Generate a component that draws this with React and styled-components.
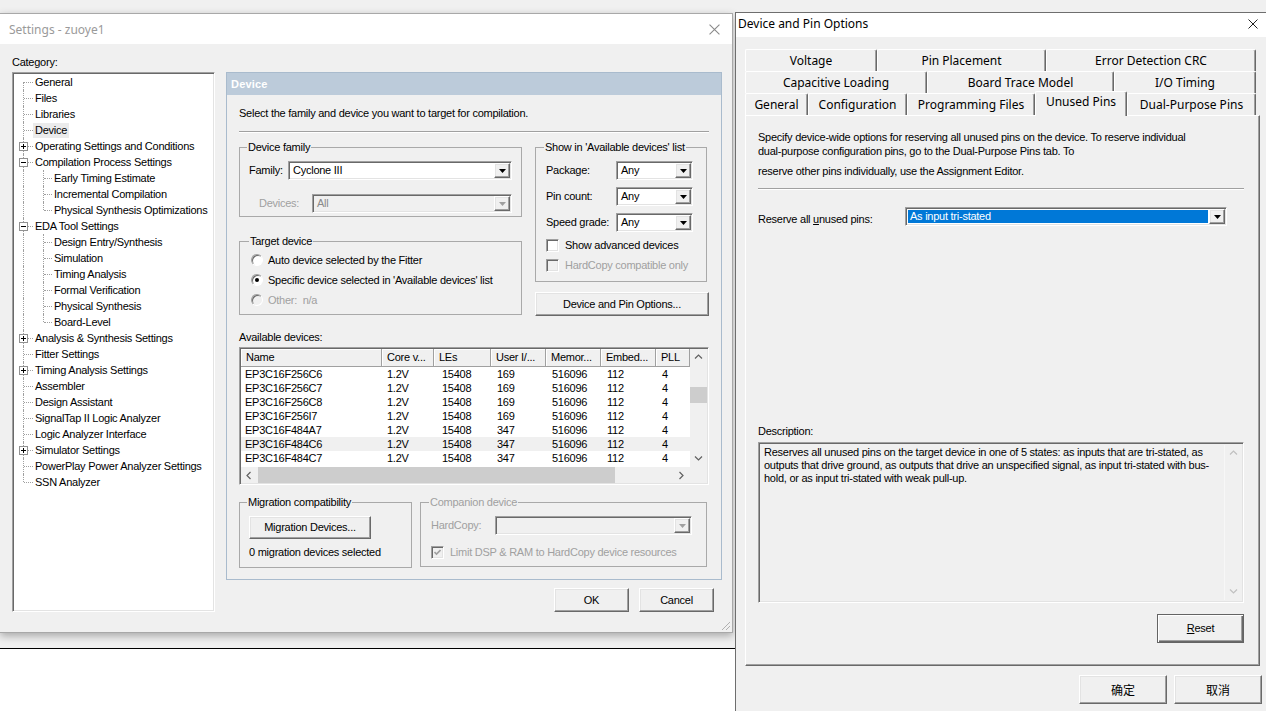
import React from "react";
import styled, { createGlobalStyle, css } from "styled-components";

const GlobalStyle = createGlobalStyle`
  html, body { margin: 0; padding: 0; background: #fff; }
  body {
    font-family: "Liberation Sans", Arial, sans-serif;
    font-size: 11px;
    color: #000;
  }
  * { box-sizing: border-box; }
`;

const ui = css`
  font-family: "Liberation Sans", Arial, sans-serif;
  font-size: 11px;
  letter-spacing: -0.25px;
  line-height: 13px;
`;

const winFont = css`
  font-family: "Noto Sans", "Noto Sans CJK SC", sans-serif;
  font-size: 12px;
`;

const sunken = css`
  border: 1px solid;
  border-color: #a0a0a0 #fff #fff #a0a0a0;
  box-shadow: inset 1px 1px 0 #696969, inset -1px -1px 0 #e3e3e3;
`;

const raised = css`
  border: 1px solid;
  border-color: #fff #696969 #696969 #fff;
  box-shadow: inset -1px -1px 0 #a0a0a0, inset 1px 1px 0 #e3e3e3;
`;

const Desktop = styled.div`
  position: relative;
  width: 1266px;
  height: 711px;
  overflow: hidden;
  background: #f0f0f0;
`;

const BackWindow = styled.div`
  position: absolute;
  left: 0;
  top: 648px;
  width: 740px;
  height: 63px;
  background: #fff;
  border-top: 1px solid #000;
`;

/* ---------- Settings window ---------- */

const SettingsWindow = styled.div`
  position: absolute;
  left: 0;
  top: 13px;
  width: 733px;
  height: 620px;
  background: #f0f0f0;
  border: 1px solid #a8a8a8;
  border-left: none;
  box-shadow: 0 3px 8px rgba(0, 0, 0, 0.3);
  display: flex;
  flex-direction: column;
`;

const TitleBar = styled.div`
  ${winFont}
  flex: none;
  height: ${(p) => p.$h}px;
  background: #fff;
  color: ${(p) => p.$color};
  display: flex;
  align-items: center;
  justify-content: space-between;
  padding: 0 ${(p) => p.$pr}px ${(p) => p.$pb || 0}px ${(p) => p.$pl}px;
`;

const SettingsBody = styled.div`
  flex: 1;
  display: flex;
  ${ui}
`;

const CategoryCol = styled.div`
  width: 203px;
  margin-left: 12px;
  padding-top: 12px;
  display: flex;
  flex-direction: column;
`;

const Caption = styled.div`
  ${ui}
  margin-top: ${(p) => p.$mt || 0}px;
  margin-bottom: ${(p) => p.$mb || 0}px;
  color: ${(p) => (p.$disabled ? "#a0a0a0" : "#000")};
  white-space: nowrap;
`;

const TreeBox = styled.div`
  ${sunken}
  width: 203px;
  height: 540px;
  background: #fff;
  padding-top: 1px;
`;

const TreeRow = styled.div`
  height: 16px;
  display: flex;
  align-items: center;
  white-space: nowrap;
`;

const Guide = styled.span`
  position: relative;
  flex: none;
  width: ${(p) => p.$w}px;
  height: 16px;
  &::before {
    content: "";
    position: absolute;
    left: 10px;
    top: ${(p) => (p.$kind === "first" ? "8px" : "0")};
    height: ${(p) => (p.$kind === "end" || p.$kind === "first" ? "8px" : "16px")};
    border-left: 1px dotted #a0a0a0;
  }
  &::after {
    content: "";
    position: absolute;
    left: 11px;
    top: 8px;
    width: ${(p) => p.$w - 11}px;
    border-top: 1px dotted #a0a0a0;
    display: ${(p) => (p.$kind === "pipe" ? "none" : "block")};
  }
`;

const Expander = styled.span`
  position: absolute;
  left: 6px;
  top: 4px;
  width: 9px;
  height: 9px;
  border: 1px solid #919191;
  background: #fff;
  z-index: 1;
  &::before {
    content: "";
    position: absolute;
    left: 1px;
    top: 3px;
    width: 5px;
    height: 1px;
    background: #000;
  }
  &::after {
    content: "";
    position: absolute;
    left: 3px;
    top: 1px;
    width: 1px;
    height: 5px;
    background: #000;
    display: ${(p) => (p.$open ? "none" : "block")};
  }
`;

const TreeLabel = styled.span`
  ${ui}
  padding: 1px 2px;
  background: ${(p) => (p.$selected ? "#ebebeb" : "transparent")};
`;

const MainCol = styled.div`
  width: 496px;
  margin-left: 11px;
  padding-top: 28px;
  display: flex;
  flex-direction: column;
`;

const Panel = styled.div`
  height: 508px;
  border: 1px solid #a9bbcd;
  display: flex;
  flex-direction: column;
`;

const PanelHeader = styled.div`
  ${ui}
  height: 22px;
  background: #bccbda;
  color: #fff;
  font-weight: bold;
  letter-spacing: 0.2px;
  display: flex;
  align-items: center;
  padding-left: 4px;
`;

const PanelBody = styled.div`
  padding: 0 12px;
  display: flex;
  flex-direction: column;
`;

const Separator = styled.div`
  height: 2px;
  border-top: 1px solid #a0a0a0;
  border-bottom: 1px solid #fff;
  margin-top: ${(p) => p.$mt || 0}px;
`;

const GroupsRow = styled.div`
  display: flex;
  align-items: flex-start;
  gap: ${(p) => p.$gap}px;
  margin-top: ${(p) => p.$mt}px;
`;

const Column = styled.div`
  width: ${(p) => p.$w}px;
  display: flex;
  flex-direction: column;
`;

const Group = styled.fieldset`
  ${ui}
  margin: ${(p) => p.$mt || 0}px 0 0 0;
  padding: 0 ${(p) => p.$pr || 9}px ${(p) => p.$pb || 0}px ${(p) => p.$pl || 9}px;
  border: 1px solid #a9a9a9;
  min-width: 0;
  width: ${(p) => p.$w}px;
  display: flex;
  flex-direction: column;
  color: ${(p) => (p.$disabled ? "#a0a0a0" : "#000")};
`;

const Legend = styled.legend`
  ${ui}
  line-height: 14px;
  padding: 0 1px;
  margin-left: -2px;
`;

const FieldRow = styled.div`
  display: flex;
  align-items: center;
  height: ${(p) => p.$h || 19}px;
  margin-top: ${(p) => p.$mt || 0}px;
  padding-left: ${(p) => p.$indent || 0}px;
`;

const FieldLabel = styled.span`
  ${ui}
  flex: ${(p) => (p.$w ? "none" : "1")};
  width: ${(p) => (p.$w ? `${p.$w}px` : "auto")};
  padding-top: ${(p) => p.$pt || 0}px;
  white-space: nowrap;
  color: ${(p) => (p.$disabled ? "#a0a0a0" : "#000")};
`;

const ComboBox = styled.div`
  ${sunken}
  ${ui}
  flex: none;
  width: ${(p) => p.$w}px;
  height: ${(p) => p.$h || 19}px;
  padding: 1px;
  display: flex;
  background: ${(p) => (p.$disabled ? "#f0f0f0" : "#fff")};
  color: ${(p) => (p.$disabled ? "#8a8a8a" : "#000")};
`;

const ComboValue = styled.div`
  flex: 1;
  display: flex;
  align-items: center;
  padding-left: 2px;
  margin: 1px;
  white-space: nowrap;
  ${(p) =>
    p.$selected &&
    css`
      background: #0078d7;
      color: #fff;
    `}
`;

const ArrowButton = styled.div`
  ${raised}
  flex: none;
  width: 16px;
  background: #f0f0f0;
  display: flex;
  align-items: center;
  justify-content: center;
`;

const Combo = ({ w, h, value, disabled, selected }) => (
  <ComboBox $w={w} $h={h} $disabled={disabled}>
    <ComboValue $selected={selected}>{value}</ComboValue>
    <ArrowButton>
      <svg width="7" height="4" viewBox="0 0 7 4">
        <path d="M0 0h7L3.5 4z" fill={disabled ? "#a0a0a0" : "#000"} />
      </svg>
    </ArrowButton>
  </ComboBox>
);

const OptionRow = styled.label`
  ${ui}
  display: flex;
  align-items: center;
  gap: ${(p) => p.$gap || 5}px;
  height: ${(p) => p.$h || 20}px;
  margin-top: ${(p) => p.$mt || 0}px;
  color: ${(p) => (p.$disabled ? "#a0a0a0" : "#000")};
  white-space: nowrap;
`;

const RadioDot = styled.span`
  flex: none;
  width: 12px;
  height: 12px;
  border-radius: 50%;
  border: 1px solid;
  border-color: #a0a0a0 #fff #fff #a0a0a0;
  box-shadow: inset 1px 1px 0 #696969;
  background: ${(p) => (p.$disabled ? "#f0f0f0" : "#fff")};
  display: flex;
  align-items: center;
  justify-content: center;
  &::after {
    content: "";
    width: 4px;
    height: 4px;
    border-radius: 50%;
    background: #000;
    display: ${(p) => (p.$checked ? "block" : "none")};
  }
`;

const CheckBox = styled.span`
  flex: none;
  width: 13px;
  height: 13px;
  ${sunken}
  background: ${(p) => (p.$disabled ? "#f0f0f0" : "#fff")};
  display: flex;
  align-items: center;
  justify-content: center;
`;

const Check = ({ checked, disabled }) => (
  <CheckBox $disabled={disabled}>
    {checked && (
      <svg width="7" height="7" viewBox="0 0 7 7">
        <path d="M0.5 3l2 2 4-4" fill="none" stroke={disabled ? "#a0a0a0" : "#000"} strokeWidth="1.6" />
      </svg>
    )}
  </CheckBox>
);

const Button = styled.button`
  ${ui}
  color: #000;
  width: ${(p) => p.$w}px;
  height: ${(p) => p.$h}px;
  margin: ${(p) => p.$mt || 0}px 0 0 0;
  padding: 0;
  background: #f0f0f0;
  ${raised}
  ${(p) =>
    p.$default &&
    css`
      border: 1px solid #646464;
      box-shadow: inset 1px 1px 0 #fff, inset -1px -1px 0 #696969, inset -2px -2px 0 #a0a0a0;
    `}
  ${(p) => p.$cjk && css`font-family: "Noto Sans CJK SC", sans-serif; font-size: 12px; letter-spacing: 0;`}
`;

const TableBox = styled.div`
  ${sunken}
  width: 470px;
  height: 138px;
  margin-top: 3px;
  padding: 1px;
  display: grid;
  grid-template-columns: 449px 17px;
  grid-template-rows: 118px 16px;
  background: #fff;
`;

const ListArea = styled.div`
  display: flex;
  flex-direction: column;
  overflow: hidden;
`;

const HeaderRow = styled.div`
  display: flex;
  height: 18px;
  flex: none;
`;

const HeaderCell = styled.div`
  ${ui}
  width: ${(p) => p.$w}px;
  flex: none;
  background: #f0f0f0;
  border-right: 1px solid #a0a0a0;
  border-bottom: 1px solid #a0a0a0;
  box-shadow: inset 1px 1px 0 #fff;
  padding-left: 5px;
  display: flex;
  align-items: center;
  white-space: nowrap;
`;

const DataRow = styled.div`
  display: flex;
  height: 14px;
  flex: none;
  background: ${(p) => (p.$hl ? "#f0f0f0" : "#fff")};
`;

const DataCell = styled.div`
  ${ui}
  line-height: 14px;
  width: ${(p) => p.$w}px;
  flex: none;
  padding-left: ${(p) => p.$pl}px;
  white-space: nowrap;
`;

const ScrollTrack = styled.div`
  background: #f0f0f0;
  display: flex;
  flex-direction: ${(p) => (p.$vertical ? "column" : "row")};
  align-items: stretch;
`;

const ScrollArrow = styled.div`
  flex: none;
  width: 17px;
  height: ${(p) => (p.$vertical ? "17px" : "16px")};
  display: flex;
  align-items: center;
  justify-content: center;
`;

const ScrollSpace = styled.div`
  flex: none;
  height: ${(p) => p.$h || "auto"};
`;

const Thumb = styled.div`
  flex: none;
  background: #cdcdcd;
  width: ${(p) => p.$w};
  height: ${(p) => p.$h};
`;

const Filler = styled.div`
  flex: 1;
`;

const Corner = styled.div`
  background: #f0f0f0;
`;

const Chevron = ({ dir, color = "#606060" }) => {
  const d = {
    up: "M1 5.5L4.5 2 8 5.5",
    down: "M1 2.5L4.5 6 8 2.5",
    left: "M5.5 1L2 4.5 5.5 8",
    right: "M2.5 1L6 4.5 2.5 8",
  }[dir];
  return (
    <svg width="9" height="9" viewBox="0 0 9 9">
      <path d={d} fill="none" stroke={color} strokeWidth="1.2" />
    </svg>
  );
};

const ButtonRow = styled.div`
  display: flex;
  justify-content: flex-end;
  gap: ${(p) => p.$gap}px;
  margin-top: ${(p) => p.$mt}px;
  padding-right: ${(p) => p.$pr}px;
`;

const Grip = styled.svg`
  position: absolute;
  right: 1px;
  bottom: 1px;
`;

const CloseIcon = ({ color, size }) => (
  <svg width={size} height={size} viewBox="0 0 10 10">
    <path d="M0.5 0.5l9 9M9.5 0.5l-9 9" stroke={color} strokeWidth="1" />
  </svg>
);

/* ---------- Device and Pin Options dialog ---------- */

const PinDialog = styled.div`
  position: absolute;
  left: 735px;
  top: 12px;
  width: 531px;
  height: 710px;
  background: #f0f0f0;
  border-left: 1px solid #6e6e6e;
  border-top: 1px solid #6e6e6e;
  display: flex;
  flex-direction: column;
`;

const DialogBody = styled.div`
  flex: 1;
  padding: 12px 4px 0 9px;
  display: flex;
  flex-direction: column;
`;

const TabRow = styled.div`
  display: flex;
  height: 22px;
  flex: none;
`;

const Tab = styled.div`
  ${winFont}
  flex: none;
  width: ${(p) => p.$w}px;
  height: 22px;
  background: #f0f0f0;
  border-top: 1px solid #fff;
  border-left: 1px solid #fff;
  border-right: 1px solid #696969;
  box-shadow: inset -1px 0 0 #a0a0a0;
  border-radius: 2px 2px 0 0;
  display: flex;
  align-items: center;
  justify-content: center;
  white-space: nowrap;
  ${(p) =>
    p.$active &&
    css`
      position: relative;
      z-index: 1;
      height: 25px;
      margin-top: -2px;
      align-items: flex-start;
      padding-top: 1px;
    `}
`;

const TabPanel = styled.div`
  width: 515px;
  height: 551px;
  border: 1px solid;
  border-color: #fff #696969 #696969 #fff;
  box-shadow: inset -1px -1px 0 #a0a0a0;
  padding: 14px 15px 0 12px;
  display: flex;
  flex-direction: column;
`;

const Para = styled.div`
  ${ui}
  line-height: 14px;
  margin-top: ${(p) => p.$mt || 0}px;
  white-space: nowrap;
`;

const ReserveRow = styled.div`
  display: flex;
  align-items: center;
  margin-top: 17px;
`;

const DescBox = styled.div`
  ${sunken}
  height: 161px;
  margin-top: 4px;
  background: #f0f0f0;
  display: flex;
  padding: 2px;
`;

const DescText = styled.div`
  ${ui}
  flex: 1;
  padding: 1px 0 0 3px;
  white-space: nowrap;
`;

const DescScroll = styled.div`
  width: 17px;
  display: flex;
  flex-direction: column;
  justify-content: space-between;
  border-left: 1px solid #f7f7f7;
`;

const U = styled.span`
  text-decoration: underline;
`;

const treeItems = [
  { label: "General", guides: ["first"] },
  { label: "Files", guides: ["tee"] },
  { label: "Libraries", guides: ["tee"] },
  { label: "Device", guides: ["tee"], selected: true },
  { label: "Operating Settings and Conditions", guides: ["tee"], exp: "plus" },
  { label: "Compilation Process Settings", guides: ["tee"], exp: "minus" },
  { label: "Early Timing Estimate", guides: ["pipe", "tee"] },
  { label: "Incremental Compilation", guides: ["pipe", "tee"] },
  { label: "Physical Synthesis Optimizations", guides: ["pipe", "end"] },
  { label: "EDA Tool Settings", guides: ["tee"], exp: "minus" },
  { label: "Design Entry/Synthesis", guides: ["pipe", "tee"] },
  { label: "Simulation", guides: ["pipe", "tee"] },
  { label: "Timing Analysis", guides: ["pipe", "tee"] },
  { label: "Formal Verification", guides: ["pipe", "tee"] },
  { label: "Physical Synthesis", guides: ["pipe", "tee"] },
  { label: "Board-Level", guides: ["pipe", "end"] },
  { label: "Analysis & Synthesis Settings", guides: ["tee"], exp: "plus" },
  { label: "Fitter Settings", guides: ["tee"] },
  { label: "Timing Analysis Settings", guides: ["tee"], exp: "plus" },
  { label: "Assembler", guides: ["tee"] },
  { label: "Design Assistant", guides: ["tee"] },
  { label: "SignalTap II Logic Analyzer", guides: ["tee"] },
  { label: "Logic Analyzer Interface", guides: ["tee"] },
  { label: "Simulator Settings", guides: ["tee"], exp: "plus" },
  { label: "PowerPlay Power Analyzer Settings", guides: ["tee"] },
  { label: "SSN Analyzer", guides: ["end"] },
];

const columns = [
  { title: "Name", w: 141, pl: 4 },
  { title: "Core v...", w: 52, pl: 5 },
  { title: "LEs", w: 57, pl: 8 },
  { title: "User I/...", w: 55, pl: 6 },
  { title: "Memor...", w: 55, pl: 6 },
  { title: "Embed...", w: 55, pl: 6 },
  { title: "PLL", w: 34, pl: 6 },
];

const devices = [
  ["EP3C16F256C6", "1.2V", "15408", "169", "516096", "112", "4"],
  ["EP3C16F256C7", "1.2V", "15408", "169", "516096", "112", "4"],
  ["EP3C16F256C8", "1.2V", "15408", "169", "516096", "112", "4"],
  ["EP3C16F256I7", "1.2V", "15408", "169", "516096", "112", "4"],
  ["EP3C16F484A7", "1.2V", "15408", "347", "516096", "112", "4"],
  ["EP3C16F484C6", "1.2V", "15408", "347", "516096", "112", "4"],
  ["EP3C16F484C7", "1.2V", "15408", "347", "516096", "112", "4"],
];

const tabRows = [
  [
    { label: "Voltage", w: 132 },
    { label: "Pin Placement", w: 169 },
    { label: "Error Detection CRC", w: 210 },
  ],
  [
    { label: "Capacitive Loading", w: 182 },
    { label: "Board Trace Model", w: 187 },
    { label: "I/O Timing", w: 142 },
  ],
  [
    { label: "General", w: 63 },
    { label: "Configuration", w: 99 },
    { label: "Programming Files", w: 128 },
    { label: "Unused Pins", w: 92, active: true },
    { label: "Dual-Purpose Pins", w: 129 },
  ],
];

function CategoryTree() {
  return (
    <TreeBox>
      {treeItems.map((item) => (
        <TreeRow key={item.label}>
          {item.guides.map((kind, i) => (
            <Guide key={i} $kind={kind} $w={i === 0 ? 20 : 19}>
              {item.exp && i === item.guides.length - 1 && <Expander $open={item.exp === "minus"} />}
            </Guide>
          ))}
          <TreeLabel $selected={item.selected}>{item.label}</TreeLabel>
        </TreeRow>
      ))}
    </TreeBox>
  );
}

function DeviceTable() {
  return (
    <TableBox>
      <ListArea>
        <HeaderRow>
          {columns.map((c) => (
            <HeaderCell key={c.title} $w={c.w}>
              {c.title}
            </HeaderCell>
          ))}
        </HeaderRow>
        {devices.map((row, r) => (
          <DataRow key={row[0]} $hl={r === 5}>
            {row.map((v, i) => (
              <DataCell key={i} $w={columns[i].w} $pl={columns[i].pl}>
                {v}
              </DataCell>
            ))}
          </DataRow>
        ))}
      </ListArea>
      <ScrollTrack $vertical>
        <ScrollArrow $vertical>
          <Chevron dir="up" />
        </ScrollArrow>
        <ScrollSpace $h="21px" />
        <Thumb $w="100%" $h="16px" />
        <Filler />
        <ScrollArrow $vertical>
          <Chevron dir="down" />
        </ScrollArrow>
      </ScrollTrack>
      <ScrollTrack>
        <ScrollArrow>
          <Chevron dir="left" />
        </ScrollArrow>
        <Thumb $w="357px" $h="100%" />
        <Filler />
        <ScrollArrow>
          <Chevron dir="right" />
        </ScrollArrow>
      </ScrollTrack>
      <Corner />
    </TableBox>
  );
}

export default function App() {
  return (
    <>
      <GlobalStyle />
      <Desktop>
        <BackWindow />

        <SettingsWindow>
          <TitleBar $h={30} $pl={9} $pr={12} $color="#9a9a9a">
            <span>Settings - zuoye1</span>
            <CloseIcon color="#8a8a8a" size={11} />
          </TitleBar>
          <SettingsBody>
            <CategoryCol>
              <Caption $mb={3}>Category:</Caption>
              <CategoryTree />
            </CategoryCol>

            <MainCol>
              <Panel>
                <PanelHeader>Device</PanelHeader>
                <PanelBody>
                  <Caption $mt={12}>Select the family and device you want to target for compilation.</Caption>
                  <Separator $mt={11} />

                  <GroupsRow $gap={13} $mt={7}>
                    <Column $w={283}>
                      <Group $w={283} $pb={3}>
                        <Legend>Device family</Legend>
                        <FieldRow $mt={7}>
                          <FieldLabel>Family:</FieldLabel>
                          <Combo w={224} value="Cyclone III" />
                        </FieldRow>
                        <FieldRow $mt={14} $indent={10}>
                          <FieldLabel $disabled>Devices:</FieldLabel>
                          <Combo w={200} value="All" disabled />
                        </FieldRow>
                      </Group>
                      <Group $w={283} $mt={17} $pb={4} $pl={11}>
                        <Legend>Target device</Legend>
                        <OptionRow $mt={2}>
                          <RadioDot />
                          Auto device selected by the Fitter
                        </OptionRow>
                        <OptionRow>
                          <RadioDot $checked />
                          Specific device selected in 'Available devices' list
                        </OptionRow>
                        <OptionRow $disabled>
                          <RadioDot $disabled />
                          Other:&nbsp; n/a
                        </OptionRow>
                      </Group>
                    </Column>

                    <Column $w={174}>
                      <Group $w={172} $pb={6} $pl={10} $pr={13}>
                        <Legend>Show in 'Available devices' list</Legend>
                        <FieldRow $mt={7}>
                          <FieldLabel>Package:</FieldLabel>
                          <Combo w={77} value="Any" />
                        </FieldRow>
                        <FieldRow $mt={7}>
                          <FieldLabel>Pin count:</FieldLabel>
                          <Combo w={77} value="Any" />
                        </FieldRow>
                        <FieldRow $mt={7}>
                          <FieldLabel>Speed grade:</FieldLabel>
                          <Combo w={77} value="Any" />
                        </FieldRow>
                        <OptionRow $mt={3} $gap={6}>
                          <Check />
                          Show advanced devices
                        </OptionRow>
                        <OptionRow $disabled $gap={6}>
                          <Check disabled />
                          HardCopy compatible only
                        </OptionRow>
                      </Group>
                      <Button $w={174} $h={24} $mt={10}>
                        Device and Pin Options...
                      </Button>
                    </Column>
                  </GroupsRow>

                  <Caption $mt={15}>Available devices:</Caption>
                  <DeviceTable />

                  <GroupsRow $gap={8} $mt={10}>
                    <Group $w={173} $pb={8}>
                      <Legend>Migration compatibility</Legend>
                      <Button $w={122} $h={23} $mt={7}>
                        Migration Devices...
                      </Button>
                      <Caption $mt={7}>0 migration devices selected</Caption>
                    </Group>
                    <Group $w={287} $pb={7} $pl={10} $pr={14} $disabled>
                      <Legend>Companion device</Legend>
                      <FieldRow $mt={7}>
                        <FieldLabel $disabled>HardCopy:</FieldLabel>
                        <Combo w={197} value="" disabled />
                      </FieldRow>
                      <OptionRow $mt={10} $h={14} $disabled $gap={6}>
                        <Check checked disabled />
                        Limit DSP &amp; RAM to HardCopy device resources
                      </OptionRow>
                    </Group>
                  </GroupsRow>
                </PanelBody>
              </Panel>

              <ButtonRow $gap={10} $mt={8} $pr={8}>
                <Button $w={75} $h={24}>
                  OK
                </Button>
                <Button $w={75} $h={24}>
                  Cancel
                </Button>
              </ButtonRow>
            </MainCol>
          </SettingsBody>
          <Grip width="11" height="11" viewBox="0 0 11 11">
            <path d="M10 2L2 10M10 6L6 10" stroke="#b0b0b0" strokeWidth="1" />
          </Grip>
        </SettingsWindow>

        <PinDialog>
          <TitleBar $h={24} $pl={2} $pr={8} $pb={3} $color="#000">
            <span>Device and Pin Options</span>
            <CloseIcon color="#222" size={10} />
          </TitleBar>
          <DialogBody>
            {tabRows.map((row, i) => (
              <TabRow key={i}>
                {row.map((t) => (
                  <Tab key={t.label} $w={t.w} $active={t.active}>
                    {t.label}
                  </Tab>
                ))}
              </TabRow>
            ))}
            <TabPanel>
              <Para>
                Specify device-wide options for reserving all unused pins on the device. To reserve individual
                <br />
                dual-purpose configuration pins, go to the Dual-Purpose Pins tab. To
              </Para>
              <Para $mt={6}>reserve other pins individually, use the Assignment Editor.</Para>
              <Separator $mt={10} />
              <ReserveRow>
                <FieldLabel $w={147} $pt={5}>
                  Reserve all <U>u</U>nused pins:
                </FieldLabel>
                <Combo w={322} value="As input tri-stated" selected />
              </ReserveRow>

              <Caption $mt={199}>Description:</Caption>
              <DescBox>
                <DescText>
                  Reserves all unused pins on the target device in one of 5 states: as inputs that are tri-stated, as
                  <br />
                  outputs that drive ground, as outputs that drive an unspecified signal, as input tri-stated with bus-
                  <br />
                  hold, or as input tri-stated with weak pull-up.
                </DescText>
                <DescScroll>
                  <ScrollArrow $vertical>
                    <Chevron dir="up" color="#c0c0c0" />
                  </ScrollArrow>
                  <ScrollArrow $vertical>
                    <Chevron dir="down" color="#c0c0c0" />
                  </ScrollArrow>
                </DescScroll>
              </DescBox>
              <ButtonRow $gap={0} $mt={11} $pr={0}>
                <Button $w={87} $h={29} $default>
                  <U>R</U>eset
                </Button>
              </ButtonRow>
            </TabPanel>
            <ButtonRow $gap={7} $mt={9} $pr={0}>
              <Button $w={88} $h={29} $cjk>
                确定
              </Button>
              <Button $w={88} $h={29} $cjk>
                取消
              </Button>
            </ButtonRow>
          </DialogBody>
        </PinDialog>
      </Desktop>
    </>
  );
}
